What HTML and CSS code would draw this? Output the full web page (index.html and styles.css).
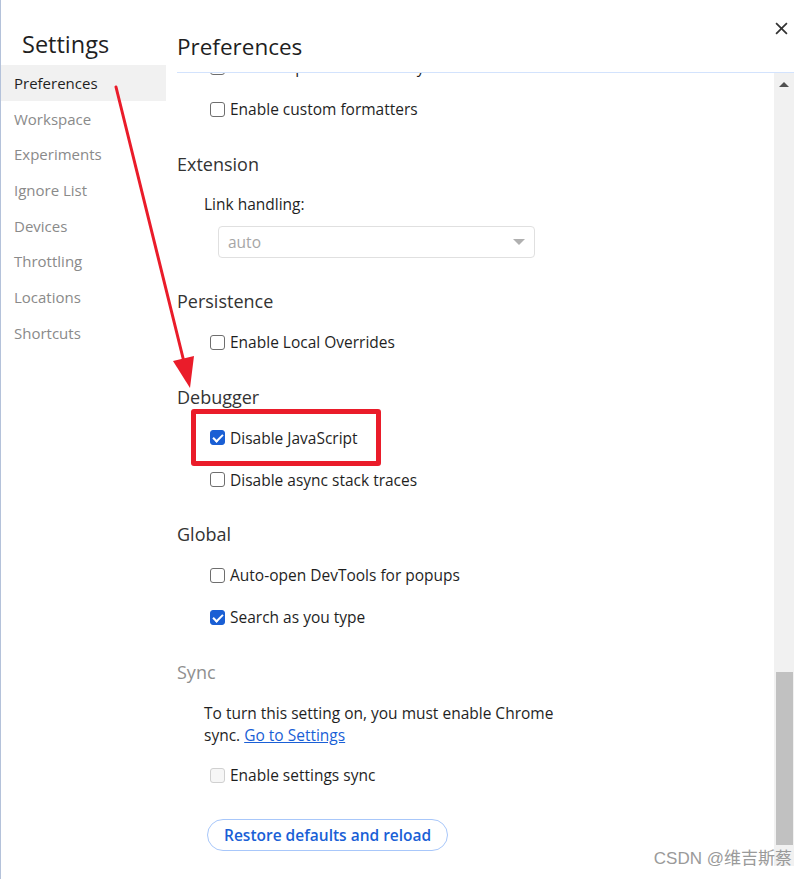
FILE: index.html
```html
<!DOCTYPE html>
<html lang="en">
<head>
<meta charset="utf-8">
<title>Settings</title>
<link rel="stylesheet" href="styles.css">
</head>
<body>
<div class="window">
  <aside class="sidebar">
    <h1 class="sidebar-title">Settings</h1>
    <nav class="tabs">
      <div class="tab selected">Preferences</div>
      <div class="tab">Workspace</div>
      <div class="tab">Experiments</div>
      <div class="tab">Ignore List</div>
      <div class="tab">Devices</div>
      <div class="tab">Throttling</div>
      <div class="tab">Locations</div>
      <div class="tab">Shortcuts</div>
    </nav>
  </aside>
  <main class="main">
    <header class="main-header">
      <h2 class="main-title">Preferences</h2>
      <button class="close" aria-label="Close">
        <svg viewBox="0 0 12 12" width="13" height="13"><path d="M1 1 L11 11 M11 1 L1 11" stroke="#333" stroke-width="1.6" fill="none"/></svg>
      </button>
    </header>
    <div class="scroller">
      <div class="content">
        <section class="section first">
          <label class="row"><span class="cb"></span>Autocomplete from history</label>
          <label class="row"><span class="cb"></span>Enable custom formatters</label>
        </section>
        <section class="section">
          <h3 class="section-title">Extension</h3>
          <div class="field-label">Link handling:</div>
          <div class="select disabled"><span>auto</span><span class="caret"></span></div>
        </section>
        <section class="section">
          <h3 class="section-title">Persistence</h3>
          <label class="row"><span class="cb"></span>Enable Local Overrides</label>
        </section>
        <section class="section">
          <h3 class="section-title">Debugger</h3>
          <label class="row"><span class="cb checked"></span>Disable JavaScript</label>
          <label class="row"><span class="cb"></span>Disable async stack traces</label>
        </section>
        <section class="section">
          <h3 class="section-title">Global</h3>
          <label class="row"><span class="cb"></span>Auto-open DevTools for popups</label>
          <label class="row"><span class="cb checked"></span>Search as you type</label>
        </section>
        <section class="section">
          <h3 class="section-title muted">Sync</h3>
          <p class="note">To turn this setting on, you must enable Chrome sync. <a href="#" class="link">Go to Settings</a></p>
          <label class="row disabled-row"><span class="cb disabled"></span>Enable settings sync</label>
        </section>
        <button class="restore">Restore defaults and reload</button>
      </div>
      <div class="scrollbar">
        <div class="sb-arrow"><span class="sb-up"></span></div>
        <div class="sb-track"></div>
        <div class="sb-thumb"></div>
      </div>
    </div>
  </main>
</div>

<svg class="annot-arrow" width="808" height="879" viewBox="0 0 808 879">
  <line x1="116" y1="87" x2="184" y2="362" stroke="#ea1c2a" stroke-width="3" stroke-linecap="round"/>
  <polygon points="190,388 173,361 194,356" fill="#ea1c2a"/>
</svg>
<div class="annot-box"></div>
<div class="watermark">CSDN @维吉斯蔡</div>
</body>
</html>
```
FILE: styles.css
```css
* { box-sizing: border-box; }

html, body {
  margin: 0;
  padding: 0;
  background: #ffffff;
}

body {
  font-family: "Open Sans", "Noto Sans", "Liberation Sans", sans-serif;
  font-size: 15.5px;
  color: #1f1f1f;
  position: relative;
  width: 808px;
  height: 879px;
  overflow: hidden;
}

.window {
  display: flex;
  width: 794px;
  height: 879px;
  border-left: 1px solid #b4c2da;
}

/* Sidebar */
.sidebar {
  width: 165px;
  flex-shrink: 0;
  display: flex;
  flex-direction: column;
}

.sidebar-title {
  margin: 0;
  height: 65px;
  padding: 29px 0 0 21px;
  font-size: 23.5px;
  line-height: 30px;
  font-weight: 400;
  color: #1f1f1f;
}

.tabs {
  display: flex;
  flex-direction: column;
}

.tab {
  height: 35.7px;
  display: flex;
  align-items: center;
  padding-left: 13px;
  font-size: 15px;
  color: #8a8a8a;
}

.tab.selected {
  background: #f1f1f1;
  color: #1f1f1f;
}

/* Main */
.main {
  flex: 1;
  display: flex;
  flex-direction: column;
  min-width: 0;
}

.main-header {
  margin-left: 11px;
  height: 73px;
  border-bottom: 1px solid #d3e3fd;
  display: flex;
  justify-content: space-between;
  align-items: flex-start;
}

.main-title {
  margin: 32px 0 0 0;
  font-size: 22.5px;
  line-height: 30px;
  font-weight: 400;
  color: #1f1f1f;
}

.close {
  margin: 21px 6px 0 0;
  width: 14px;
  height: 14px;
  padding: 0;
  border: 0;
  background: transparent;
  display: flex;
  align-items: center;
  justify-content: center;
}

.scroller {
  margin-left: 11px;
  height: 793px;
  display: flex;
  overflow: hidden;
}

.content {
  flex: 1;
  min-width: 0;
  display: flex;
  flex-direction: column;
}

.section {
  display: flex;
  flex-direction: column;
  margin-bottom: 13.5px;
}

.section.first {
  margin-top: -27px;
}

.section-title {
  margin: 0;
  height: 40px;
  display: flex;
  align-items: center;
  font-size: 18px;
  font-weight: 400;
  color: #333333;
}

.section-title.muted {
  color: #8f8f8f;
}

.row {
  height: 42px;
  display: flex;
  align-items: center;
  padding-left: 33px;
  font-size: 15.5px;
  color: #1f1f1f;
}

.cb {
  width: 15px;
  height: 15px;
  border: 1px solid #6e6e6e;
  border-radius: 3px;
  margin-right: 5px;
  flex-shrink: 0;
  background: #fff;
  position: relative;
}

.cb.checked {
  background: #1a5fd4;
  border-color: #1a5fd4;
}

.cb.checked::after {
  content: "";
  position: absolute;
  left: 4px;
  top: 1px;
  width: 4px;
  height: 8px;
  border: solid #fff;
  border-width: 0 2px 2px 0;
  transform: rotate(45deg);
}

.cb.disabled {
  border-color: #d0d0d0;
  background: #f6f6f6;
}

.field-label {
  height: 41px;
  display: flex;
  align-items: center;
  padding-left: 27px;
  font-size: 15.5px;
}

.select {
  margin: 1px 0 10px 41px;
  width: 317px;
  height: 32px;
  border: 1px solid #e0e0e0;
  border-radius: 4px;
  display: flex;
  align-items: center;
  justify-content: space-between;
  padding: 0 9px 0 9px;
  color: #a6a6a6;
  font-size: 15.5px;
}

.caret {
  width: 0;
  height: 0;
  border-left: 6px solid transparent;
  border-right: 6px solid transparent;
  border-top: 6px solid #b0b0b0;
}

.note {
  margin: 10.5px 0 0 0;
  padding-left: 27px;
  max-width: 400px;
  font-size: 15.5px;
  line-height: 22px;
  color: #1f1f1f;
}

.link {
  color: #1a5fd6;
  text-decoration: underline;
}

.row.disabled-row {
  margin-top: 8px;
}

.restore {
  align-self: flex-start;
  margin: 9.5px 0 0 30px;
  height: 32px;
  padding: 0 16px;
  border: 1px solid #a8c7fa;
  border-radius: 16px;
  background: #fff;
  color: #1a5fd6;
  font-family: inherit;
  font-size: 15.5px;
  font-weight: 600;
}

/* Scrollbar */
.scrollbar {
  width: 20px;
  flex-shrink: 0;
  background: #f1f1f1;
  display: flex;
  flex-direction: column;
  align-items: center;
}

.sb-arrow {
  height: 22px;
  display: flex;
  align-items: center;
  justify-content: center;
}

.sb-up {
  width: 0;
  height: 0;
  border-left: 5px solid transparent;
  border-right: 5px solid transparent;
  border-bottom: 5px solid #505050;
}

.sb-track {
  flex: 1;
}

.sb-thumb {
  width: 17px;
  height: 173px;
  background: #c1c1c1;
  margin-bottom: 21px;
}

/* Annotations */
.annot-arrow {
  position: absolute;
  left: 0;
  top: 0;
  pointer-events: none;
}

.annot-box {
  position: absolute;
  left: 191px;
  top: 409px;
  width: 190px;
  height: 57px;
  border: 5px solid #ea1c2a;
  border-radius: 3px;
  pointer-events: none;
}

.watermark {
  position: absolute;
  right: 16px;
  top: 848px;
  font-family: "Liberation Sans", "Noto Sans CJK SC", sans-serif;
  font-size: 17px;
  color: #9a9a9a;
  line-height: 22px;
}
```
